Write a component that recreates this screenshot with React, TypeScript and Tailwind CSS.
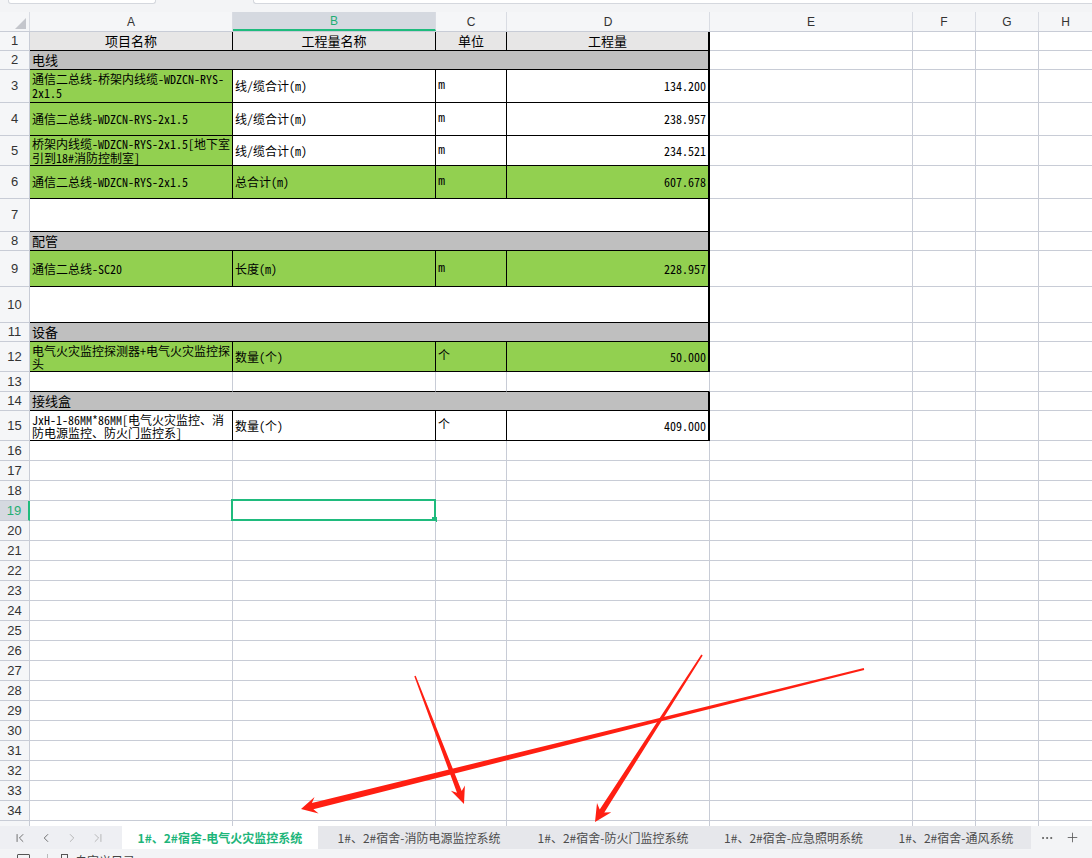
import React from "react";
import { ChevronFirst, ChevronLast, ChevronLeft, ChevronRight, Plus, Ellipsis } from "lucide-react";

const mono =
  "font-['Noto_Sans_Mono_CJK_SC','Liberation_Mono','Noto_Sans_CJK_SC',monospace] text-[12px] leading-[14px] text-black";
const monoC =
  "font-['Liberation_Mono','Noto_Sans_CJK_SC',monospace] text-[12px] leading-[14px] text-black";
const sans = "font-['Noto_Sans_CJK_SC',sans-serif] text-[13px] leading-[16px] text-black";
const base = "shrink-0 flex items-center overflow-hidden whitespace-nowrap";
const K = "border-r border-b border-r-black border-b-black";
const K2 = "border-r-2 border-b border-r-black border-b-black";
const Gb = "border-r border-b border-r-[#c8ccd6] border-b-[#c8ccd6]";
const W = "w-[203px]";
const WC = "w-[71px]";

type Cell = { c: string; t?: React.ReactNode; sel?: boolean };
type Row = { n: number; h: string; cells: Cell[] };

const green = "bg-[#92d050]";
const white = "bg-white";

function dataRow(
  n: number,
  h: string,
  a: React.ReactNode,
  b: string,
  c: string,
  d: string,
  bgA: string,
  bgRest: string
): Row {
  return {
    n,
    h,
    cells: [
      { c: `${base} ${W} ${K} ${bgA} pl-[2px] ${mono}`, t: a },
      { c: `${base} ${W} ${K} ${bgRest} pl-[2px] ${mono}`, t: b },
      { c: `${base} ${WC} ${K} ${bgRest} pl-[2px] ${monoC}`, t: c },
      { c: `${base} ${W} ${K2} ${bgRest} justify-end pr-[2px] ${mono}`, t: d },
    ],
  };
}

function section(n: number, label: string): Row {
  return {
    n,
    h: "h-[19px]",
    cells: [{ c: `${base} w-[680px] ${K2} bg-[#bfbfbf] pl-[2px] ${sans}`, t: label }],
  };
}

function merged(n: number, h: string): Row {
  return { n, h, cells: [{ c: `${base} w-[680px] ${K2} bg-white` }] };
}

const rows: Row[] = [
  {
    n: 1,
    h: "h-[19px]",
    cells: [
      { c: `${base} ${W} ${K} bg-[#e7e6e6] justify-center ${sans}`, t: "项目名称" },
      { c: `${base} ${W} ${K} bg-[#e7e6e6] justify-center ${sans}`, t: "工程量名称" },
      { c: `${base} ${WC} ${K} bg-[#e7e6e6] justify-center ${sans}`, t: "单位" },
      { c: `${base} ${W} ${K2} bg-[#e7e6e6] justify-center ${sans}`, t: "工程量" },
    ],
  },
  section(2, "电线"),
  dataRow(
    3,
    "h-[33px]",
    <span className="leading-[14px]">
      通信二总线-桥架内线缆-WDZCN-RYS-
      <br />
      2x1.5
    </span>,
    "线/缆合计(m)",
    "m",
    "134.200",
    green,
    white
  ),
  dataRow(4, "h-[33px]", "通信二总线-WDZCN-RYS-2x1.5", "线/缆合计(m)", "m", "238.957", green, white),
  dataRow(
    5,
    "h-[30px]",
    <span className="leading-[14px]">
      桥架内线缆-WDZCN-RYS-2x1.5[地下室
      <br />
      引到18#消防控制室]
    </span>,
    "线/缆合计(m)",
    "m",
    "234.521",
    green,
    white
  ),
  dataRow(6, "h-[33px]", "通信二总线-WDZCN-RYS-2x1.5", "总合计(m)", "m", "607.678", green, green),
  merged(7, "h-[33px]"),
  section(8, "配管"),
  dataRow(9, "h-[36px]", "通信二总线-SC20", "长度(m)", "m", "228.957", green, green),
  merged(10, "h-[36px]"),
  section(11, "设备"),
  dataRow(
    12,
    "h-[30px]",
    <span className="leading-[13px]">
      电气火灾监控探测器+电气火灾监控探
      <br />头
    </span>,
    "数量(个)",
    "个",
    "50.000",
    green,
    green
  ),
  {
    n: 13,
    h: "h-[20px]",
    cells: [
      { c: `${base} ${W} border-r border-b border-r-[#c8ccd6] border-b-black bg-white` },
      { c: `${base} ${W} border-r border-b border-r-[#c8ccd6] border-b-black bg-white` },
      { c: `${base} ${WC} border-r border-b border-r-[#c8ccd6] border-b-black bg-white` },
      { c: `${base} ${W} border-r border-b border-r-[#c8ccd6] border-b-black bg-white` },
    ],
  },
  section(14, "接线盒"),
  dataRow(
    15,
    "h-[30px]",
    <span className="leading-[13px]">
      JxH-1-86MM*86MM[电气火灾监控、消
      <br />
      防电源监控、防火门监控系]
    </span>,
    "数量(个)",
    "个",
    "409.000",
    white,
    white
  ),
];

for (let n = 16; n <= 36; n++) {
  rows.push({
    n,
    h: "h-[20px]",
    cells: [
      { c: `${base} ${W} ${Gb} bg-white` },
      { c: `${base} ${W} ${Gb} bg-white relative overflow-visible`, sel: n === 19 },
      { c: `${base} ${WC} ${Gb} bg-white` },
      { c: `${base} ${W} ${Gb} bg-white` },
    ],
  });
}

function arrowPoints(
  tx: number,
  ty: number,
  px: number,
  py: number,
  w0: number,
  w1: number,
  hl: number,
  hw: number
) {
  const dx = px - tx;
  const dy = py - ty;
  const len = Math.hypot(dx, dy);
  const ux = dx / len;
  const uy = dy / len;
  const nx = -uy;
  const ny = ux;
  const bx = px - ux * hl;
  const by = py - uy * hl;
  const sx = px - ux * (hl - 4);
  const sy = py - uy * (hl - 4);
  const pts = [
    [tx + (nx * w0) / 2, ty + (ny * w0) / 2],
    [sx + (nx * w1) / 2, sy + (ny * w1) / 2],
    [bx + nx * hw, by + ny * hw],
    [px, py],
    [bx - nx * hw, by - ny * hw],
    [sx - (nx * w1) / 2, sy - (ny * w1) / 2],
    [tx - (nx * w0) / 2, ty - (ny * w0) / 2],
  ];
  return pts.map((p) => `${p[0].toFixed(1)},${p[1].toFixed(1)}`).join(" ");
}

function ColHead({ w, label, sel }: { w: string; label: string; sel?: boolean }) {
  return (
    <div
      className={
        sel
          ? `${w} shrink-0 h-full flex items-center justify-center border-r border-r-[#d9dce3] bg-[#d5d9e0] text-[#1fae74] border-b-2 border-b-[#1fbb7d]`
          : `${w} shrink-0 h-full flex items-center justify-center border-r border-r-[#d9dce3] text-[#333]`
      }
    >
      {label}
    </div>
  );
}

export default function App() {
  return (
    <div className="relative w-[1092px] h-[858px] overflow-hidden bg-white flex flex-col">
      {/* top strip */}
      <div className="h-[12px] shrink-0 bg-[#f3f4f6] flex items-start">
        <div className="ml-[8px] w-[148px] h-[4px] bg-white border border-t-0 border-[#d5d8de] rounded-b-[3px]" />
        <div className="ml-[97px] flex-1 h-[4px] bg-white border border-t-0 border-r-0 border-[#d5d8de] rounded-bl-[3px]" />
      </div>

      {/* sheet */}
      <div className="h-[814px] shrink-0 overflow-hidden">
        {/* column headers */}
        <div className="h-[20px] flex bg-[#f5f6f8] border-b border-b-[#c8ccd6] font-['Liberation_Sans',sans-serif] text-[12px]">
          <div className="w-[30px] shrink-0 h-full border-r border-r-[#d9dce3] relative">
            <svg className="absolute left-[15px] top-[6px]" width="11" height="11" viewBox="0 0 11 11">
              <polygon points="11,0 11,11 0,11" fill="#c4c6cc" />
            </svg>
          </div>
          <ColHead w="w-[203px]" label="A" />
          <ColHead w="w-[203px]" label="B" sel />
          <ColHead w="w-[71px]" label="C" />
          <ColHead w="w-[203px]" label="D" />
          <ColHead w="w-[203px]" label="E" />
          <ColHead w="w-[63px]" label="F" />
          <ColHead w="w-[63px]" label="G" />
          <div className="flex-1 h-full flex items-center justify-center text-[#333]">H</div>
        </div>

        {rows.map((r) => (
          <div key={r.n} className={`${r.h} flex`}>
            <div
              className={
                r.n === 19
                  ? "w-[30px] shrink-0 flex items-center justify-center border-r-2 border-b border-r-[#1fbb7d] border-b-[#c8ccd6] bg-[#d5d9e0] text-[#1fae74] font-['Liberation_Sans',sans-serif] text-[13px]"
                  : "w-[30px] shrink-0 flex items-center justify-center border-r border-b border-r-[#c8ccd6] border-b-[#c8ccd6] bg-[#f5f6f8] text-[#333] font-['Liberation_Sans',sans-serif] text-[13px]"
              }
            >
              {r.n}
            </div>
            {r.cells.map((c, i) => (
              <div key={i} className={c.c}>
                {c.t}
                {c.sel && (
                  <>
                    <div className="absolute -left-[2px] -top-[2px] -right-[1px] -bottom-[1px] border-2 border-[#1fbb7d]" />
                    <div className="absolute -right-[2px] -bottom-[2px] w-[5px] h-[5px] bg-[#1fbb7d]" />
                  </>
                )}
              </div>
            ))}
            <div className={`${base} w-[203px] ${Gb}`} />
            <div className={`${base} w-[63px] ${Gb}`} />
            <div className={`${base} w-[63px] ${Gb}`} />
            <div className="flex-1 border-b border-b-[#c8ccd6]" />
          </div>
        ))}
      </div>

      {/* sheet tabs */}
      <div className="h-[23px] shrink-0 flex bg-[#e6e7eb] font-['Noto_Sans_CJK_SC',sans-serif] text-[12px]">
        <div className="w-[122px] shrink-0 bg-[#eeeff3] flex items-center pl-[13px] gap-[12px]">
          <ChevronFirst size={14} strokeWidth={1.4} className="text-[#555]" />
          <ChevronLeft size={14} strokeWidth={1.4} className="text-[#555]" />
          <ChevronRight size={14} strokeWidth={1.4} className="text-[#aaa]" />
          <ChevronLast size={14} strokeWidth={1.4} className="text-[#aaa]" />
        </div>
        <div className="flex-1 flex overflow-hidden">
          <div className="w-[196px] shrink-0 bg-white flex items-center justify-center text-[#1db57a] font-bold whitespace-nowrap">
            1#、2#宿舍-电气火灾监控系统
          </div>
          <div className="w-[202px] shrink-0 flex items-center justify-center text-[#4d4d4d] whitespace-nowrap">
            1#、2#宿舍-消防电源监控系统
          </div>
          <div className="w-[186px] shrink-0 flex items-center justify-center text-[#4d4d4d] whitespace-nowrap">
            1#、2#宿舍-防火门监控系统
          </div>
          <div className="w-[175px] shrink-0 flex items-center justify-center text-[#4d4d4d] whitespace-nowrap">
            1#、2#宿舍-应急照明系统
          </div>
          <div className="w-[150px] shrink-0 flex items-center justify-center text-[#4d4d4d] whitespace-nowrap">
            1#、2#宿舍-通风系统
          </div>
        </div>
        <div className="w-[61px] shrink-0 bg-[#f3f4f6] flex items-center pl-[9px] gap-[11px] text-[#555]">
          <Ellipsis size={14} strokeWidth={1.6} />
          <Plus size={15} strokeWidth={1.3} />
        </div>
      </div>

      {/* status bar */}
      <div className="flex-1 bg-[#f3f4f6] flex items-start pt-[5px] text-[#444] font-['Noto_Sans_CJK_SC',sans-serif] text-[12px] leading-[14px]">
        <div className="ml-[17px] w-[13px] h-[10px] border border-[#555] rounded-[1px]" />
        <div className="ml-[17px] w-px h-[12px] bg-[#bbb]" />
        <div className="ml-[13px] w-[7px] h-[9px] border border-[#555]" />
        <span className="ml-[7px]">自定义目录</span>
      </div>

      {/* red annotation arrows */}
      <svg className="absolute inset-0 pointer-events-none" width="1092" height="858" viewBox="0 0 1092 858">
        <polygon points={arrowPoints(864, 669, 301, 809, 1.8, 6.5, 16, 8.5)} fill="#ff1f12" />
        <polygon points={arrowPoints(415, 676, 464, 804, 1.6, 5, 17, 7.5)} fill="#ff1f12" />
        <polygon points={arrowPoints(702, 655, 595, 822, 1.6, 5.5, 17, 8.5)} fill="#ff1f12" />
      </svg>
    </div>
  );
}
